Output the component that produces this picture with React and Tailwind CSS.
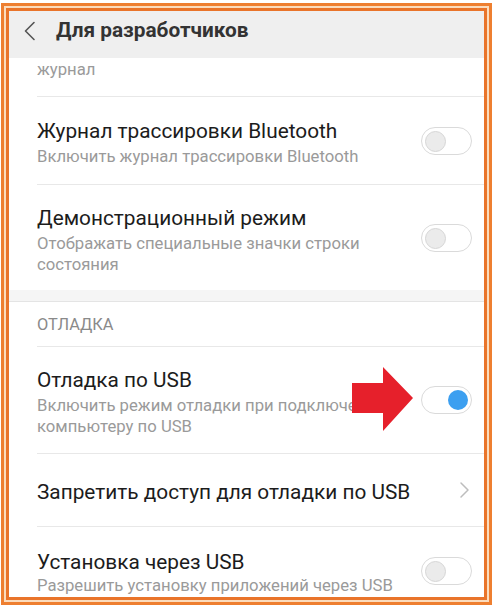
import React from "react";

const font = { fontFamily: "Roboto, 'Noto Sans', sans-serif" };

function Toggle({ on }) {
  return (
    <div className="relative h-[28px] w-[51px] shrink-0 rounded-full border border-[#dadada] bg-white">
      {on ? (
        <span className="absolute right-[3px] top-[3px] h-[20px] w-[20px] rounded-full bg-[#3c9ff0]" />
      ) : (
        <span className="absolute left-[3px] top-[3px] h-[21px] w-[21px] rounded-full border border-[#d6d6d6] bg-[#ebebeb]" />
      )}
    </div>
  );
}

function Row({ title, sub, height, toggle, on, chevron, last }) {
  return (
    <div className={`ml-[28px] flex shrink-0 items-center pr-[12px] ${last ? "" : "border-b border-[#e8e8e8]"} ${height}`}>
      <div className="flex-1 pt-[4px]">
        <div className="whitespace-nowrap text-[20.8px] leading-[26px] text-[#1c1c1c]">{title}</div>
        {sub && <div className="mt-[2px] whitespace-nowrap text-[16.7px] leading-[21px] text-[#9a9a9a]">{sub}</div>}
      </div>
      {toggle && <Toggle on={on} />}
      {chevron && (
        <svg width="12" height="18" viewBox="0 0 12 18" className="mr-[1px]" fill="none" stroke="#bdbdbd" strokeWidth="1.5">
          <path d="M2 2l7 7-7 7" strokeLinecap="round" strokeLinejoin="round" />
        </svg>
      )}
    </div>
  );
}

export default function App() {
  return (
    <div className="relative h-[608px] w-[500px] overflow-hidden bg-white" style={font}>
      <div className="ml-[1px] mt-[3px] h-[602px] w-[491px] border-[3px] border-[#ee7f30] bg-[#fbdcbd] p-[2px]">
        <div className="flex h-full flex-col overflow-hidden border-[3px] border-[#e9742a] bg-white">
          {/* header */}
          <div className="flex h-[47px] shrink-0 items-center bg-[#efefef] pb-[10px] pt-[2px]">
            <svg width="14" height="20" viewBox="0 0 14 20" className="ml-[14px]" fill="none" stroke="#555" strokeWidth="1.6">
              <path d="M11 1.5L2.5 10l8.5 8.5" strokeLinecap="round" strokeLinejoin="round" />
            </svg>
            <span className="ml-[19px] text-[20.8px] font-bold text-[#333]">Для разработчиков</span>
          </div>

          {/* list */}
          <div className="ml-[28px] h-[39px] shrink-0 border-b border-[#e8e8e8] pt-[1px] text-[16.7px] leading-[21px] text-[#9a9a9a]">
            журнал
          </div>
          <Row title="Журнал трассировки Bluetooth" sub="Включить журнал трассировки Bluetooth" height="h-[88px]" toggle />
          <Row
            title="Демонстрационный режим"
            sub={<>Отображать специальные значки строки<br />состояния</>}
            height="h-[105px]"
            toggle
            last
          />
          <div className="h-[12px] shrink-0 border-b border-[#e4e4e4] bg-[#f5f5f5]" />
          <div className="ml-[28px] flex h-[45px] shrink-0 items-center border-b border-[#e8e8e8] pt-[3px] text-[16.4px] text-[#8a8a8a]">
            ОТЛАДКА
          </div>
          <Row
            title="Отладка по USB"
            sub={<>Включить режим отладки при подключении к<br />компьютеру по USB</>}
            height="h-[107px]"
            toggle
            on
          />
          <Row title="Запретить доступ для отладки по USB" height="h-[73px]" chevron />
          <div className="ml-[28px] flex h-[72px] shrink-0 items-start pr-[12px] pt-[22px]">
            <div className="min-w-0 flex-1">
              <div className="whitespace-nowrap text-[20.8px] leading-[26px] text-[#1c1c1c]">Установка через USB</div>
              <div className="whitespace-nowrap text-[16.7px] leading-[21px] text-[#9a9a9a]">Разрешить установку приложений через USB</div>
            </div>
            <div className="mt-[8px]">
              <Toggle />
            </div>
          </div>
        </div>
      </div>

      {/* red arrow overlay */}
      <svg className="absolute left-0 top-0" width="500" height="608" viewBox="0 0 500 608">
        <polygon points="352,383 383,383 383,367 413,398 383,431 383,413 352,413" fill="#e6202b" />
      </svg>
    </div>
  );
}
